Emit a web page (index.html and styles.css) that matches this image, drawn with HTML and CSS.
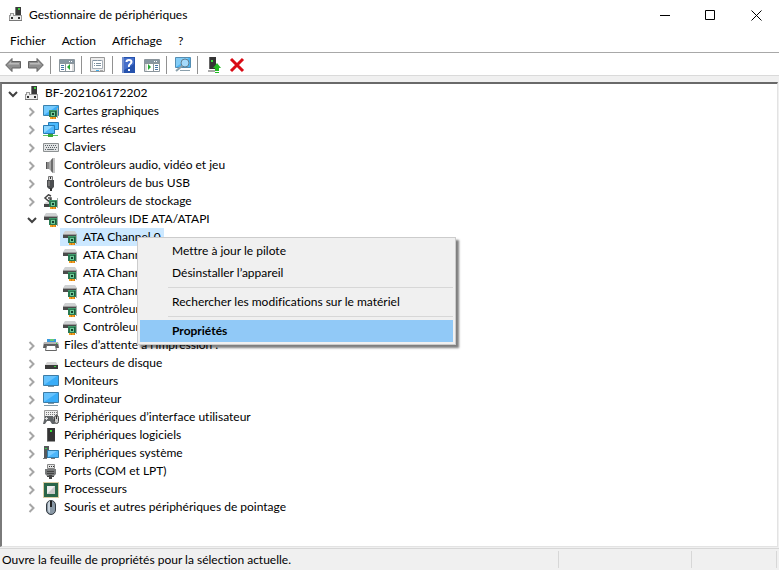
FILE: index.html
```html
<!DOCTYPE html>
<html lang="fr">
<head>
    <meta charset="UTF-8">
    <title>Gestionnaire de périphériques</title>
    <meta name="viewport" content="width=device-width, initial-scale=1.0">
    <link rel="stylesheet" href="styles.css">
</head>
<body>
    <!-- Shared icons -->
    <svg class="sprite" aria-hidden="true">
        <symbol id="i-open" viewBox="0 0 16 16"><path d="M4 6l4 4 4-4" fill="none" stroke="#404040" stroke-width="2"/></symbol>
        <symbol id="i-closed" viewBox="0 0 16 16"><path d="M5.500 4l4 4-4 4" fill="none" stroke="#a6a6a6" stroke-width="2"/></symbol>
        <symbol id="i-root" viewBox="0 0 16 16">
            <path d="M7 0h6v8H7z" fill="#3a3a3a"/><path d="M7 0h1v8H7z" fill="#7a7a7a"/><path d="M10 1h2v2h-2z" fill="#3fd13f"/>
            <path d="M2 6h4v2h8v6H1V8h1z" fill="#9a9a9a"/><path d="M3 7h2v2h8v4H2V9h1z" fill="#ededed"/><path d="M1 13h13v1H1z" fill="#787878"/>
            <path d="M3 10h2v2H3zM10 10h2v2h-2z" fill="#303030"/>
        </symbol>
        <symbol id="i-card" viewBox="0 0 16 16">
            <path d="M6 6h8v7H6z" fill="#2a7a52"/><path d="M6 6h8v1H6z" fill="#3f9a6b"/><path d="M14 4h1v10h-1z" fill="#a4aeaa"/>
            <path d="M8 8h4v4H8z" fill="#6fca98"/><path d="M9 9h2v2H9z" fill="#14402b"/><path d="M12 7h1v5h-1z" fill="#1d5a3b"/>
            <path d="M7 13h6v2H7z" fill="#f0a020"/><path d="M9 13h1v2H9zM12 13h1v2h-1z" fill="#d97a12"/>
        </symbol>
        <symbol id="i-display" viewBox="0 0 16 16">
            <path d="M.5 1.500h15v10H.5z" fill="#3cadf7" stroke="#3a81ac"/><path d="M1 2h13L1 11z" fill="#74cafe"/>
            <use href="#i-card"/>
        </symbol>
        <symbol id="i-network" viewBox="0 0 16 16">
            <path d="M5.500.5h10v7h-10z" fill="#4ab9fc" stroke="#287bb4"/><path d="M.5 3.500h11v8H.5z" fill="#4db6fb" stroke="#287bb4"/><path d="M1 4h9l-9 7z" fill="#8bd5ff"/>
            <path d="M0 13h15v1H0z" fill="#62c262"/><path d="M5 12h5v3H5z" fill="#38a838"/>
        </symbol>
        <symbol id="i-keyboard" viewBox="0 0 16 16">
            <path d="M.5 3.500h15v8H.5z" fill="#e2e4e5" stroke="#8e9293"/><path d="M2 5.500h12M3 7.500h11M2 9.500h2M12 9.500h2" stroke="#596166" stroke-dasharray="1 1"/><path d="M4 9.500h7" stroke="#6d7478"/>
        </symbol>
        <symbol id="i-audio" viewBox="0 0 16 16"><path d="M3 4h3v7H3z" fill="#8b8b8b"/><path d="M3 4h1v7H3z" fill="#555"/><path d="M6 4l4-4v15l-4-4z" fill="#a8a8a8"/><path d="M8 2l2-2v15l-2-2z" fill="#6c6c6c"/><path d="M10 0h2v15h-2z" fill="#c4c4c4"/></symbol>
        <symbol id="i-usb" viewBox="0 0 16 16"><path d="M5.500.5h4v4h-4z" fill="#ddd" stroke="#777"/><path d="M7 1h1v2H7z" fill="#333"/><path d="M4 4h7v7l-2 2H6l-2-2z" fill="#4c4e50"/><path d="M5 5h2v5H5z" fill="#777"/><path d="M7 12h2v3H7z" fill="#333"/></symbol>
        <symbol id="i-storage" viewBox="0 0 16 16"><path d="M8 2L5.500.8 2 4l3.500 3L8 5.500V4H5" fill="none" stroke="#444" stroke-width="1.500"/><path d="M1 10l2-2h6v5H1z" fill="#d4d4d4"/><path d="M1 10h5v3H1z" fill="#444"/><use href="#i-card"/></symbol>
        <symbol id="i-ide" viewBox="0 0 16 16"><path d="M1 4l2-3h10l2 3z" fill="#cfd1d2"/><path d="M1 4h14v4H1z" fill="#4b4b4b"/><path d="M1 4h14v1H1z" fill="#9c9c9c"/><use href="#i-card"/></symbol>
        <symbol id="i-printer" viewBox="0 0 16 16"><path d="M4 1h9v4H4z" fill="#3a9bdd"/><path d="M7 1h4v2H7z" fill="#68cb75"/><path d="M1 4h14l1 6H0z" fill="#5e5e5e"/><path d="M1 4h14v2H1z" fill="#b5b5b5"/><path d="M3.500 7.500h9l1 5h-11z" fill="#fff" stroke="#666"/><path d="M13 5h1v1h-1z" fill="#3d3"/></symbol>
        <symbol id="i-disk" viewBox="0 0 16 16"><path d="M2 9l2-3h9l2 3z" fill="#d5d5d5"/><path d="M2 9h13v4H2z" fill="#3a3a3a"/><path d="M11 10h2v1h-2z" fill="#34d234"/></symbol>
        <symbol id="i-monitor" viewBox="0 0 16 16"><path d="M.5 1.500h15v10H.5z" fill="#39adf8" stroke="#3d7ca5"/><path d="M1 2h13L1 11z" fill="#65c2fd"/><path d="M5 12h6v1H5z" fill="#7993a2"/></symbol>
        <symbol id="i-computer" viewBox="0 0 16 16"><path d="M.5.5h15v10H.5z" fill="#39adf8" stroke="#3d7ca5"/><path d="M1 1h13L1 10z" fill="#65c2fd"/><path d="M5 11h6v1H5zM1 13h14v1H1z" fill="#7f98a7"/></symbol>
        <symbol id="i-hid" viewBox="0 0 16 16"><path d="M1.500.5h13v7h-13z" fill="#eee" stroke="#999"/><path d="M3 2.500h11M3 4.500h11" stroke="#777" stroke-dasharray="1 1"/><path d="M2 6h8l2 8H9l-2-3H4l-2 3H0z" fill="#606467"/><path d="M3 7h1v3H3zM2 8h3v1H2z" fill="#ddd"/><rect x="11.500" y="5.500" width="4" height="8" rx="2" fill="#ccc" stroke="#444"/><path d="M13 6h1v3h-1z" fill="#333"/></symbol>
        <symbol id="i-software" viewBox="0 0 16 16"><path d="M4 0h8v14H4z" fill="#343434"/><path d="M4 0h1v13H4z" fill="#5b5b5b"/><path d="M7 2h2v2H7z" fill="#36df36"/><path d="M4 13h8v1H4z" fill="#999"/></symbol>
        <symbol id="i-system" viewBox="0 0 16 16"><path d="M1 0h5v12H1z" fill="#55595c"/><path d="M2 2h2v1H2z" fill="#34cf4a"/><path d="M4.500 4.500h11v7h-11z" fill="#4cb6fa" stroke="#307eae"/><path d="M5 5h9l-9 6z" fill="#7accff"/><path d="M8 12h4v1H8zM0 12h4v1H0z" fill="#777"/></symbol>
        <symbol id="i-port" viewBox="0 0 16 16"><path d="M4.500.5h7v4h-7z" fill="#e4e4e4" stroke="#888"/><path d="M6 2h1v1H6zM8 2h1v1H8zM10 2h1v1h-1z" fill="#333"/><path d="M2 5h11v5l-2 2H4l-2-2z" fill="#77797a"/><path d="M4 7h7v1H4zM4 9h7v1H4z" fill="#444"/><path d="M4 12h2v1H4zM9 12h2v1H9zM6 11h3v4H6z" fill="#444"/></symbol>
        <symbol id="i-cpu" viewBox="0 0 16 16"><path d="M.5.5h15v15H.5z" fill="none" stroke="#b89a4a" stroke-dasharray="1 1"/><path d="M1 1h14v14H1z" fill="#2a6548"/><path d="M4 4h8v8H4z" fill="#c8c8c8"/><path d="M4 4h8l-8 8z" fill="#eee"/></symbol>
        <symbol id="i-mouse" viewBox="0 0 16 16"><rect x="3.500" y=".5" width="9" height="14" rx="4.500" fill="#8998a5" stroke="#343b42"/><path d="M5 3q1-2 2-2v12q-2-1-2-3z" fill="#c9d3dc"/><path d="M7 1h2v6H7z" fill="#222"/></symbol>
    </svg>

    <div class="window">
        <header class="titlebar">
            <svg class="icon"><use href="#i-root"/></svg>
            <h1>Gestionnaire de périphériques</h1>
            <div class="controls">
                <button type="button" aria-label="Réduire"><svg class="glyph" viewBox="0 0 11 11"><path d="M1 5.500h10"/></svg></button>
                <button type="button" aria-label="Agrandir"><svg class="glyph" viewBox="0 0 11 11"><path d="M.5.5h9v9h-9z"/></svg></button>
                <button type="button" aria-label="Fermer"><svg class="glyph" viewBox="0 0 11 11"><path d="M.5.5l10 10M10.500.5l-10 10"/></svg></button>
            </div>
        </header>

        <nav class="menubar">
            <button type="button">Fichier</button>
            <button type="button">Action</button>
            <button type="button">Affichage</button>
            <button type="button">?</button>
        </nav>

        <div class="toolbar">
            <button type="button" aria-label="Précédent"><svg class="icon" viewBox="0 0 16 16"><path d="M.7 8L7 1.500v3h8.500v6.500H7v3.500z" fill="#8f8f8f" stroke="#626262"/><path d="M3 7.500l3-3V6h8v1.500z" fill="#bbb"/></svg></button>
            <button type="button" aria-label="Suivant"><svg class="icon" viewBox="0 0 16 16"><path d="M15.300 8L9 1.500v3H.5v6.500H9v3.500z" fill="#8f8f8f" stroke="#626262"/><path d="M13 7.500l-3-3V6H2v1.500z" fill="#bbb"/></svg></button>
            <span class="divider"></span>
            <button type="button" aria-label="Arborescence"><svg class="icon" viewBox="0 0 16 16"><path d="M.5 2.500h15v12H.5z" fill="#fff" stroke="#8b959c"/><path d="M1 3h14v3H1z" fill="#8796a1"/><path d="M10 4h1v1h-1zM12 4h1v1h-1z" fill="#fff"/><path d="M6.500 6v8M1 6.500h14" stroke="#8b959c"/><path d="M2 8.500h3M2 10.500h3M2 12.500h3" stroke="#4774a5"/><path d="M11 7v6l-3-3z" fill="#24a834"/><path d="M13 7h2v7h-2z" fill="#ddd"/></svg></button>
            <span class="divider"></span>
            <button type="button" aria-label="Propriétés"><svg class="icon" viewBox="0 0 16 16"><path d="M.5.5h14v14H.5z" fill="#ececec" stroke="#999"/><path d="M2.500 3.500h10v8h-10z" fill="#fff" stroke="#a8b1ba"/><path d="M3 3h4v1H3zM8 3h3v1H8z" fill="#8293a2"/><path d="M4 6.500h1M6 6.500h5M4 8.500h1M6 8.500h5" stroke="#7b8f9e"/><path d="M6 13h3v1H6z" fill="#3fb0f0"/><path d="M10 13h3v1h-3z" fill="#aaa"/></svg></button>
            <span class="divider"></span>
            <button type="button" aria-label="Aide"><svg class="icon" viewBox="0 0 16 16"><path d="M1 0h13v16H1z" fill="#2552ad"/><path d="M1 0h2v16H1z" fill="#728fce"/><path d="M3 1h10v6L3 13z" fill="#456fcb"/><path d="M5.500 5q0-2 2.500-2t2.500 2q0 1-1.500 2t-1 3" fill="none" stroke="#fff" stroke-width="2"/><path d="M7 12h2v2H7z" fill="#fff"/></svg></button>
            <button type="button" aria-label="Volet d'actions"><svg class="icon" viewBox="0 0 16 16"><path d="M.5 2.500h15v12H.5z" fill="#fff" stroke="#8b959c"/><path d="M1 3h14v3H1z" fill="#8796a1"/><path d="M10 4h1v1h-1zM12 4h1v1h-1z" fill="#fff"/><path d="M9.500 6v8M1 6.500h14" stroke="#8b959c"/><path d="M11 8.500h3M11 10.500h3M11 12.500h3" stroke="#4774a5"/><path d="M4 7v6l3-3z" fill="#24a834"/><path d="M1 7h2v7H1z" fill="#ddd"/></svg></button>
            <span class="divider"></span>
            <button type="button" aria-label="Analyser"><svg class="icon" viewBox="0 0 16 16"><path d="M.5.5h15v10H.5z" fill="#4ab5f5" stroke="#548eb3"/><path d="M1 1h13L1 10z" fill="#83cdf7"/><path d="M5 13h10v1H5z" fill="#8ba0ac"/><circle cx="10" cy="6" r="4" fill="#a5dafb" stroke="#627f91"/><path d="M7 9l-6 5" stroke="#8ba0ac" stroke-width="2"/></svg></button>
            <span class="divider"></span>
            <button type="button" aria-label="Mettre à jour"><svg class="icon" viewBox="0 0 16 16"><path d="M3 0h7v12H3z" fill="#343434"/><path d="M3 0h1v12H3z" fill="#666"/><path d="M5 3h2v2H5z" fill="#36df36"/><path d="M2 13h7v2H2z" fill="#aaa"/><path d="M11 6l4 5h-2v1H9v-1H7zM9 12h4v2H9zM9 15h4v1H9z" fill="#23b923"/></svg></button>
            <button type="button" aria-label="Désinstaller"><svg class="icon" viewBox="0 0 16 16"><path d="M2 2l12 12M14 2L2 14" stroke="#d90b16" stroke-width="3"/></svg></button>
        </div>

        <main class="content">
            <ul class="tree">
                <li>
                    <div class="row"><button type="button" class="toggle" aria-label="Réduire"><svg class="icon"><use href="#i-open"/></svg></button><svg class="icon"><use href="#i-root"/></svg><span class="label">BF-202106172202</span></div>
                    <ul>
                        <li class="row"><button type="button" class="toggle" aria-label="Développer"><svg class="icon"><use href="#i-closed"/></svg></button><svg class="icon"><use href="#i-display"/></svg><span class="label">Cartes graphiques</span></li>
                        <li class="row"><button type="button" class="toggle" aria-label="Développer"><svg class="icon"><use href="#i-closed"/></svg></button><svg class="icon"><use href="#i-network"/></svg><span class="label">Cartes réseau</span></li>
                        <li class="row"><button type="button" class="toggle" aria-label="Développer"><svg class="icon"><use href="#i-closed"/></svg></button><svg class="icon"><use href="#i-keyboard"/></svg><span class="label">Claviers</span></li>
                        <li class="row"><button type="button" class="toggle" aria-label="Développer"><svg class="icon"><use href="#i-closed"/></svg></button><svg class="icon"><use href="#i-audio"/></svg><span class="label">Contrôleurs audio, vidéo et jeu</span></li>
                        <li class="row"><button type="button" class="toggle" aria-label="Développer"><svg class="icon"><use href="#i-closed"/></svg></button><svg class="icon"><use href="#i-usb"/></svg><span class="label">Contrôleurs de bus USB</span></li>
                        <li class="row"><button type="button" class="toggle" aria-label="Développer"><svg class="icon"><use href="#i-closed"/></svg></button><svg class="icon"><use href="#i-storage"/></svg><span class="label">Contrôleurs de stockage</span></li>
                        <li>
                            <div class="row"><button type="button" class="toggle" aria-label="Réduire"><svg class="icon"><use href="#i-open"/></svg></button><svg class="icon"><use href="#i-ide"/></svg><span class="label">Contrôleurs IDE ATA/ATAPI</span></div>
                            <ul class="leaves">
                                <li class="row selected"><svg class="icon"><use href="#i-ide"/></svg><span class="label">ATA Channel 0</span></li>
                                <li class="row"><svg class="icon"><use href="#i-ide"/></svg><span class="label">ATA Channel 0</span></li>
                                <li class="row"><svg class="icon"><use href="#i-ide"/></svg><span class="label">ATA Channel 1</span></li>
                                <li class="row"><svg class="icon"><use href="#i-ide"/></svg><span class="label">ATA Channel 1</span></li>
                                <li class="row"><svg class="icon"><use href="#i-ide"/></svg><span class="label">Contrôleur</span></li>
                                <li class="row"><svg class="icon"><use href="#i-ide"/></svg><span class="label">Contrôleur</span></li>
                            </ul>
                        </li>
                        <li class="row"><button type="button" class="toggle" aria-label="Développer"><svg class="icon"><use href="#i-closed"/></svg></button><svg class="icon"><use href="#i-printer"/></svg><span class="label">Files d’attente à l’impression :</span></li>
                        <li class="row"><button type="button" class="toggle" aria-label="Développer"><svg class="icon"><use href="#i-closed"/></svg></button><svg class="icon"><use href="#i-disk"/></svg><span class="label">Lecteurs de disque</span></li>
                        <li class="row"><button type="button" class="toggle" aria-label="Développer"><svg class="icon"><use href="#i-closed"/></svg></button><svg class="icon"><use href="#i-monitor"/></svg><span class="label">Moniteurs</span></li>
                        <li class="row"><button type="button" class="toggle" aria-label="Développer"><svg class="icon"><use href="#i-closed"/></svg></button><svg class="icon"><use href="#i-computer"/></svg><span class="label">Ordinateur</span></li>
                        <li class="row"><button type="button" class="toggle" aria-label="Développer"><svg class="icon"><use href="#i-closed"/></svg></button><svg class="icon"><use href="#i-hid"/></svg><span class="label">Périphériques d’interface utilisateur</span></li>
                        <li class="row"><button type="button" class="toggle" aria-label="Développer"><svg class="icon"><use href="#i-closed"/></svg></button><svg class="icon"><use href="#i-software"/></svg><span class="label">Périphériques logiciels</span></li>
                        <li class="row"><button type="button" class="toggle" aria-label="Développer"><svg class="icon"><use href="#i-closed"/></svg></button><svg class="icon"><use href="#i-system"/></svg><span class="label">Périphériques système</span></li>
                        <li class="row"><button type="button" class="toggle" aria-label="Développer"><svg class="icon"><use href="#i-closed"/></svg></button><svg class="icon"><use href="#i-port"/></svg><span class="label">Ports (COM et LPT)</span></li>
                        <li class="row"><button type="button" class="toggle" aria-label="Développer"><svg class="icon"><use href="#i-closed"/></svg></button><svg class="icon"><use href="#i-cpu"/></svg><span class="label">Processeurs</span></li>
                        <li class="row"><button type="button" class="toggle" aria-label="Développer"><svg class="icon"><use href="#i-closed"/></svg></button><svg class="icon"><use href="#i-mouse"/></svg><span class="label">Souris et autres périphériques de pointage</span></li>
                    </ul>
                </li>
            </ul>
        </main>

        <footer class="statusbar">
            <p>Ouvre la feuille de propriétés pour la sélection actuelle.</p>
            <span class="pane"></span>
            <span class="pane small"></span>
        </footer>
    </div>

    <div class="context-menu">
        <button type="button">Mettre à jour le pilote</button>
        <button type="button">Désinstaller l’appareil</button>
        <hr>
        <button type="button">Rechercher les modifications sur le matériel</button>
        <hr>
        <button type="button" class="active">Propriétés</button>
    </div>
</body>
</html>
```
FILE: styles.css
```css
* {
    margin: 0;
    padding: 0;
    box-sizing: border-box;
}
body {
    font-family: "Segoe UI", Lato, "Open Sans", sans-serif;
    font-size: 12px;
    font-variant-ligatures: none;
    line-height: 18px;
    color: #000;
    background: #fff;
}
button {
    font: inherit;
    font-variant-ligatures: none;
    color: inherit;
    background: none;
    border: none;
}
ul {
    list-style: none;
}
.sprite {
    display: none;
}
.icon {
    display: block;
    flex: none;
    width: 16px;
    height: 16px;
}
.window {
    display: flex;
    flex-direction: column;
    height: 100vh;
    background: #f0f0f0;
}

/* Title bar */
.titlebar {
    display: flex;
    align-items: center;
    height: 30px;
    padding-left: 8px;
    background: #fff;
}
.titlebar h1 {
    flex: 1;
    padding-left: 5px;
    font-size: 12px;
    font-weight: normal;
}
.controls {
    display: flex;
}
.controls button {
    display: flex;
    align-items: center;
    justify-content: center;
    width: 46px;
    height: 29px;
}
.glyph {
    width: 11px;
    height: 11px;
    fill: none;
    stroke: #000;
}

/* Menu bar */
.menubar {
    display: flex;
    gap: 16px;
    height: 23px;
    padding: 2px 10px;
    background: #fff;
    border-bottom: 1px solid #a8a8a8;
}

/* Toolbar */
.toolbar {
    display: flex;
    align-items: center;
    height: 23px;
    padding: 1px 0 0 1px;
    background: #fff;
    border-bottom: 1px solid #dadada;
}
.toolbar button {
    display: flex;
    justify-content: center;
    width: 23px;
}
.divider {
    width: 1px;
    height: 18px;
    margin: 0 4px 0 3px;
    background: #919191;
}

/* Device tree */
.content {
    flex: 1;
    min-height: 0;
    margin: 6px 1px 1px 0;
    overflow: hidden;
    background: #fff;
    border: 1px solid #e3e3e3;
    border-top: 2px solid #696969;
    border-left: 2px solid #7a7a7a;
}
.tree {
    padding-left: 3px;
}
.tree ul {
    padding-left: 19px;
}
.tree .leaves {
    padding-left: 36px;
}
.leaves .row {
    padding-left: 2px;
}
.row {
    display: flex;
    align-items: center;
    height: 18px;
}
.row .icon {
    margin-top: 2px;
}
.toggle {
    margin-right: 3px;
}
.label {
    padding: 0 3px 0 5px;
    white-space: nowrap;
}
.selected {
    width: fit-content;
    background: #cce8ff;
}

/* Status bar */
.statusbar {
    display: flex;
    height: 22px;
    padding: 2px;
    border-top: 1px solid #d7d7d7;
}
.statusbar p {
    flex: 1;
    border-right: 1px solid #d7d7d7;
}
.pane {
    width: 133px;
    border-right: 1px solid #d7d7d7;
}
.pane.small {
    width: 85px;
}

/* Context menu */
.context-menu {
    position: absolute;
    top: 237px;
    left: 137px;
    width: 319px;
    padding: 2px;
    background: #f0f0f0;
    border: 1px solid #ccc;
    box-shadow: 3px 3px 2px rgba(0, 0, 0, 0.5);
}
.context-menu button {
    display: block;
    width: 100%;
    height: 22px;
    padding-left: 32px;
    text-align: left;
}
.context-menu .active {
    font-weight: bold;
    background: #91c9f7;
}
.context-menu hr {
    height: 1px;
    margin: 3px 0 3px 28px;
    border: none;
    background: #d7d7d7;
}
```
